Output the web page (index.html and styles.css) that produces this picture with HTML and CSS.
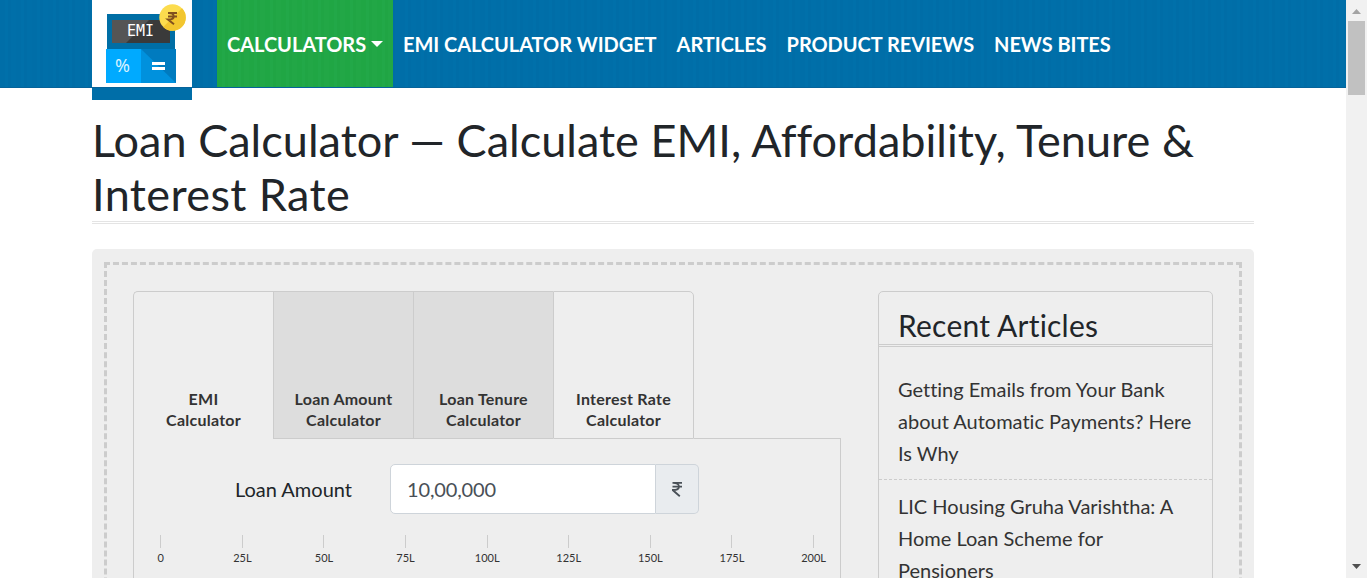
FILE: index.html
```html
<!DOCTYPE html>
<html lang="en">
<head>
<meta charset="utf-8">
<title>Loan Calculator</title>
<link rel="stylesheet" href="styles.css">
</head>
<body>
<div class="window">
  <div class="page">
    <header class="site-header">
      <a class="logo">
        <svg width="100" height="100" viewBox="0 0 100 100">
          <path fill="#fff" d="M0 0h100v87H0z"/>
          <path fill="#006ea8" d="M0 88h100v12H0z"/>
          <path fill="#06639a" d="M0 87h100v1H0z"/>
          <path fill="#006ea5" d="M15 14h68v36H15z"/>
          <path fill="#555" d="M20 20h58v23H20z"/>
          <path fill="#3a3a3a" d="M57 20h21v23H34z"/>
          <path fill="#00aaff" d="M14 49h35v34H14z"/>
          <path fill="#0091dd" d="M49 49h35v34H49z"/>
          <path fill="#007bbf" d="M49 49h35v34z"/>
          <path fill="#fff" d="M60 62h13v3H60zM60 67h13v3H60z"/>
          <text class="logo-emi" x="48.5" y="36.300" text-anchor="middle">EMI</text>
          <text class="logo-pct" x="30.500" y="71.500" text-anchor="middle">%</text>
          <circle cx="80.500" cy="17.500" r="13.200" fill="#fcdc4e"/>
          <path fill="#f2c62f" d="M90 8.300A13.200 13.200 0 0 1 71.200 26.900z"/>
          <path fill="none" stroke="#80501f" stroke-width="2" d="M76 13h9M76 16.400h9M76.500 13c7 0 7 6.600 0 6.600h-.5L82 24.200"/>
        </svg>
      </a>
      <nav class="nav">
        <a class="nav-item active"><span>CALCULATORS</span><i class="caret"></i></a>
        <a class="nav-item">EMI CALCULATOR WIDGET</a>
        <a class="nav-item">ARTICLES</a>
        <a class="nav-item">PRODUCT REVIEWS</a>
        <a class="nav-item">NEWS BITES</a>
      </nav>
    </header>
    <h1 class="title">Loan Calculator — Calculate EMI, Affordability, Tenure &amp;<br><span class="title-end">Interest Rate</span></h1>
    <main class="panel">
      <div class="dashed">
        <section class="calculator">
          <div class="tabs">
            <div class="tab">EMI<br>Calculator</div>
            <div class="tab shaded">Loan Amount<br>Calculator</div>
            <div class="tab shaded">Loan Tenure<br>Calculator</div>
            <div class="tab">Interest Rate<br>Calculator</div>
            <div class="tab-rest"></div>
          </div>
          <div class="form">
            <div class="field">
              <label class="label">Loan Amount</label>
              <div class="amount">10,00,000</div>
              <div class="unit"><svg width="11" height="16" viewBox="0 0 11 16"><path fill="none" stroke="#495057" stroke-width="1.800" d="M.5 1.800h9.500M.5 5.600h9.500M1 1.800c8 0 8 7.200 0 7.200h-.4L7.800 15.300"/></svg></div>
            </div>
            <div class="scale">
              <span class="mark">0</span><span class="mark">25L</span><span class="mark">50L</span><span class="mark">75L</span><span class="mark">100L</span><span class="mark">125L</span><span class="mark">150L</span><span class="mark">175L</span><span class="mark">200L</span>
            </div>
          </div>
        </section>
        <aside class="recent">
          <h2 class="recent-title">Recent Articles</h2>
          <div class="article first">Getting Emails from Your Bank<br>about Automatic Payments? Here<br>Is Why</div>
          <div class="article">LIC Housing Gruha Varishtha: A<br>Home Loan Scheme for<br>Pensioners</div>
        </aside>
      </div>
    </main>
  </div>
  <div class="scrollbar">
    <svg width="21" height="21" viewBox="0 0 21 21"><path fill="#a3a3a3" d="M6 14l4.500-5 4.500 5z"/></svg>
    <div class="thumb"></div>
    <svg class="down" width="21" height="21" viewBox="0 0 21 21"><path fill="#505050" d="M6 7h9l-4.500 5z"/></svg>
  </div>
</div>
</body>
</html>
```
FILE: styles.css
```css
* { box-sizing: border-box; }
body { margin: 0; font-family: Lato, sans-serif; font-variant-ligatures: none; color: #212529; background: #fff; }
.window { display: flex; height: 578px; overflow: hidden; }
.page { width: 1346px; overflow: hidden; }
.site-header {
  display: flex; height: 88px; padding-left: 92px;
  border-bottom: 1px solid #06639a;
  background: repeating-linear-gradient(90deg, #006ea8 0 5px, #0070aa 5px 8px, #006da7 8px 11px, #006fa9 11px 16px);
}
.logo { width: 100px; height: 100px; margin-right: 25px; flex: none; }
.logo svg { display: block; }
.logo-emi { font: 15px "DejaVu Sans Mono", monospace; fill: #fff; }
.logo-pct { font: 18px "Noto Sans", sans-serif; fill: #d8f2ff; }
.nav { display: flex; height: 87px; }
.nav-item { display: flex; align-items: center; padding: 0 10px; color: #fff; font-size: 20px; font-weight: 700; line-height: 30px; letter-spacing: -.05px; white-space: nowrap; }
.active { width: 176px; letter-spacing: -.03px; background: repeating-linear-gradient(90deg, #20a644 0 5px, #22a848 5px 8px, #20a544 8px 11px, #22a746 11px 16px); }
.caret { margin-left: 5px; border: 6px solid transparent; border-top-color: #fff; border-bottom: 0; }
.title { width: 1162px; margin: 25px 0 0 92px; height: 111px; border-bottom: 3px double #e4e4e4; font-size: 45px; line-height: 54px; font-weight: 400; letter-spacing: .03px; white-space: nowrap; }
.title-end { letter-spacing: .4px; }
.panel { width: 1162px; margin: 25px 0 0 92px; padding: 13px 12px; height: 800px; border-radius: 5px; background: #eee; }
.dashed { display: flex; justify-content: space-between; align-items: flex-start; height: 700px; padding: 26px; border: 3px dashed #ccc; }
.calculator { width: 708px; }
.tabs { display: flex; height: 148px; }
.tab {
  display: flex; align-items: flex-end; justify-content: center; width: 140px;
  border: solid #ccc; border-width: 1px 0 0 1px; padding-bottom: 9px;
  text-align: center; color: #333; font-size: 16px; font-weight: 700; line-height: 21px; letter-spacing: .24px;
}
.tab:first-child { border-top-left-radius: 5px; }
.tab:nth-child(4) { width: 141px; border-right-width: 1px; border-bottom-width: 1px; border-top-right-radius: 5px; padding-bottom: 8px; }
.shaded { background: #ddd; border-bottom-width: 1px; padding-bottom: 8px; }
.tab-rest { flex: 1; border-bottom: 1px solid #ccc; }
.form { height: 500px; border: solid #ccc; border-width: 0 1px; padding-top: 25px; }
.field { display: flex; height: 50px; align-items: center; font-size: 20px; }
.label { width: 218px; margin-right: 38px; text-align: right; line-height: 30px; }
.amount { width: 266px; height: 50px; border: 1px solid #ced4da; border-radius: 5px 0 0 5px; background: #fff; color: #495057; padding: 0 16px; line-height: 48px; letter-spacing: -.15px; }
.unit { display: flex; align-items: center; justify-content: center; width: 43px; height: 50px; border: 1px solid #ced4da; border-left: 0; border-radius: 0 5px 5px 0; background: #e9ecef; }
.scale { display: flex; margin: 21px 0 0 -14px; width: 735px; }
.mark { display: flex; flex-direction: column; align-items: center; width: 81.600px; flex: none; font-size: 11px; line-height: 14px; color: #333; }
.mark::before { content: ""; width: 1px; height: 13px; margin-bottom: 3px; background: #ccc; }
.recent { width: 335px; height: 640px; border: 1px solid #ccc; border-radius: 5px; }
.recent-title { margin: 0; height: 55px; padding: 15px 19px 0; border-bottom: 3px double #ccc; font-size: 30px; line-height: 36px; font-weight: 400; letter-spacing: .22px; }
.article { padding: 10px 19px; font-size: 20px; line-height: 32px; color: #333; white-space: nowrap; border-bottom: 1px dashed #ccc; }
.first { padding: 26px 19px 10px; }
.scrollbar { display: flex; flex-direction: column; align-items: center; width: 21px; height: 578px; background: #f1f1f1; }
.scrollbar svg { display: block; flex: none; }
.thumb { width: 17px; height: 74px; background: #c1c1c1; }
.down { margin-top: auto; }
```
